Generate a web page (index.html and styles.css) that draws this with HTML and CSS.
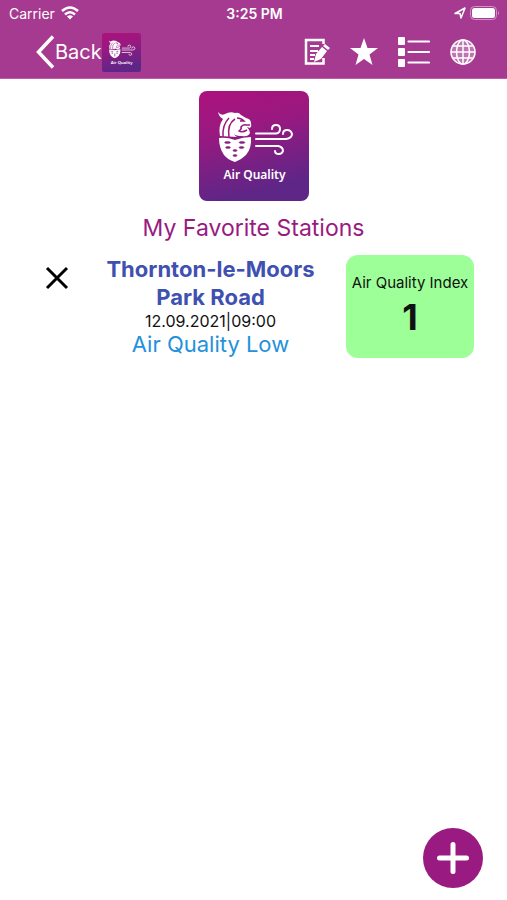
FILE: index.html
```html
<!DOCTYPE html>
<html lang="en">
<head>
<meta charset="utf-8">
<meta name="viewport" content="width=device-width, initial-scale=1">
<title>My Favorite Stations</title>
<link rel="stylesheet" href="styles.css">
</head>
<body>
<svg class="defs" width="0" height="0" aria-hidden="true">
  <defs>
    <linearGradient id="logo-bg" x1="0" y1="0" x2="0.25" y2="1">
      <stop offset="0" stop-color="#ac117c"/>
      <stop offset="0.4" stop-color="#991980"/>
      <stop offset="1" stop-color="#5d2687"/>
    </linearGradient>
    <symbol id="logo" viewBox="0 0 110 110">
      <rect width="110" height="110" rx="8" fill="url(#logo-bg)"/>
      <path fill="#fff" d="M19 21Q22 25 26 23Q31 20 36 22Q40 21 42 24L47 27Q52 28 52 32Q53 35 51 37L48 36Q51 39 51 42Q49 46 43 45Q37 45 35 43Q36 45 38 46L21 45Q19 35 24 28Q20 26 19 21Z"/>
      <path class="logo-cut" d="M30 27Q23 34 24 46M36 28Q28 33 30 46M38 27Q42 27 45 30L41 30M51 34L47 34Q44 33 42 36Q43 38 40 40Q43 42 48 39"/>
      <path fill="#fff" d="M20 47Q28 46 36 49Q44 46 52 46Q53 57 47 64Q42 69 36 71Q29 69 25 64Q20 57 20 47Z"/>
      <g class="logo-mark"><ellipse cx="28.500" cy="51.500" rx="3" ry="1"/><ellipse cx="43" cy="51.500" rx="3" ry="1"/><ellipse cx="29" cy="56.500" rx="2.500" ry="1"/><ellipse cx="42.500" cy="56.500" rx="2.500" ry="1"/><ellipse cx="36" cy="59.500" rx="2" ry="1"/><ellipse cx="36" cy="64.500" rx="2" ry="1"/></g>
      <path class="logo-wind" d="M57 42.500H77Q81 42 81 38Q81 34 77 34Q73 34 73 38M57 48H87Q93 47 93 43Q92 39 88 39Q84 39 84 43M57 55H79Q84 56 84 60Q83 63 80 63Q76 63 76 60"/>
      <text x="55.500" y="88" text-anchor="middle" class="logo-text">Air Quality</text>
    </symbol>
  </defs>
</svg>

<header class="header">
  <div class="status">
    <span class="carrier">Carrier
      <svg width="18" height="14" viewBox="0 0 18 14" aria-hidden="true"><g fill="none" stroke="#fff" stroke-width="2.600"><path d="M1 5Q9-2 17 5"/><path d="M4 8.500Q9 4 14 8.500"/></g><path d="M6 10.500Q9 8 12 10.500L9 13.500Z" fill="#fff"/></svg>
    </span>
    <span class="time">3:25 PM</span>
    <span class="power">
      <svg width="12" height="12" viewBox="0 0 12 12" aria-hidden="true"><path d="M1 6.500L11 1L7 11L6 6.500Z" fill="none" stroke="#fff" stroke-width="1.500" stroke-linejoin="round"/></svg>
      <svg width="30" height="14" viewBox="0 0 30 14" aria-hidden="true"><rect x=".5" y=".5" width="26" height="13" rx="4" fill="none" stroke="#d194c8"/><rect x="2" y="2" width="23" height="10" rx="2.500" fill="#fff"/><path d="M28 5Q30 7 28 9Z" fill="#d194c8"/></svg>
    </span>
  </div>
  <nav class="nav">
    <a class="back" href="#">
      <svg width="19" height="34" viewBox="0 0 19 34" aria-hidden="true"><path d="M17 1.500L2.500 17L17 32.500" fill="none" stroke="#fff" stroke-width="3.500"/></svg>
      <span>Back</span>
      <svg class="mini-logo" aria-hidden="true"><use href="#logo"/></svg>
    </a>
    <div class="actions">
      <button class="icon-button" aria-label="Report">
        <svg width="26" height="28" viewBox="0 0 26 28" aria-hidden="true"><path d="M19.500 6V2H2V25.500H19.500V20" fill="none" stroke="#fff" stroke-width="2.500"/><path d="M6 8H15M6 13H14M6 17H11M6 21H10" stroke="#fff" stroke-width="2"/><path d="M10 24L12 16L18 9L23 13L17 21Z" fill="#fff"/><path d="M19 8L21 6L26 10L24 12Z" fill="#fff"/></svg>
      </button>
      <button class="icon-button" aria-label="Favorites">
        <svg width="28" height="28" viewBox="0 0 28 28" aria-hidden="true"><path d="M14 0L17.500 10H28L19.500 16.500L22.500 27L14 21L5.500 27L8.500 16.500L0 10H10.500Z" fill="#fff"/></svg>
      </button>
      <button class="icon-button" aria-label="Station list">
        <svg width="32" height="32" viewBox="0 0 32 32" aria-hidden="true"><g fill="#fff"><rect y="1" width="7" height="8" rx="1"/><rect y="12" width="7" height="8" rx="1"/><rect y="23" width="7" height="8" rx="1"/></g><path d="M10.500 5.500H31M10.500 16H31M10.500 26.500H31" stroke="#fff" stroke-width="2.200" stroke-linecap="round"/></svg>
      </button>
      <button class="icon-button" aria-label="Language">
        <svg width="26" height="26" viewBox="0 0 26 26" aria-hidden="true"><circle cx="13" cy="13" r="12.500" fill="#fff" fill-opacity=".3"/><g fill="none" stroke="#fff" stroke-width="1.500"><circle cx="13" cy="13" r="12"/><ellipse cx="13" cy="13" rx="6.500" ry="12"/><path d="M13 1V25M1 13H25M3 7H23M3 19H23"/></g></svg>
      </button>
    </div>
  </nav>
</header>

<main class="main">
  <svg class="logo" role="img" aria-label="Air Quality"><use href="#logo"/></svg>
  <h1 class="title">My Favorite Stations</h1>
  <article class="station">
    <button class="remove" aria-label="Remove station">
      <svg width="24" height="24" viewBox="0 0 24 24" aria-hidden="true"><path d="M2 2L22 22M22 2L2 22" stroke="#000" stroke-width="3"/></svg>
    </button>
    <div class="details">
      <h2 class="name">Thornton-le-Moors Park Road</h2>
      <p class="date">12.09.2021|09:00</p>
      <p class="quality">Air Quality Low</p>
    </div>
    <div class="index">
      <span class="index-label">Air Quality Index</span>
      <strong class="index-value">1</strong>
    </div>
  </article>
</main>

<button class="add" aria-label="Add station">
  <svg width="32" height="32" viewBox="0 0 32 32" aria-hidden="true"><path d="M16 2.500V29.500M2.500 16H29.500" stroke="#fff" stroke-width="5" stroke-linecap="round"/></svg>
</button>
</body>
</html>
```
FILE: styles.css
```css
* {
  box-sizing: border-box;
}

body {
  margin: 0;
  min-height: 100vh;
  background: #fff;
  color: #111;
  font-family: Inter, "Liberation Sans", sans-serif;
}

h1, h2, p {
  margin: 0;
}

button {
  padding: 0;
  border: 0;
  background: none;
  cursor: pointer;
}

svg {
  display: block;
  flex: none;
}

.defs {
  position: absolute;
}

.header {
  background: #a53a90;
  border-bottom: 1px solid #b85fa7;
  color: #fff;
}

.status {
  display: grid;
  grid-template-columns: 1fr auto 1fr;
  align-items: center;
  height: 26px;
  padding: 0 7px 0 9px;
  font-size: 14px;
}

.carrier, .power {
  display: flex;
  align-items: center;
  gap: 6px;
}

.power {
  justify-content: flex-end;
  gap: 4px;
}

.time {
  font-weight: 600;
}

.nav {
  display: flex;
  align-items: center;
  justify-content: space-between;
  height: 52px;
  padding: 0 31px 0 36px;
}

.back {
  display: flex;
  align-items: center;
  color: #fff;
  font-size: 20px;
  text-decoration: none;
}

.mini-logo {
  width: 39px;
  height: 39px;
}

.actions {
  display: flex;
  align-items: center;
  gap: 20px;
}

.icon-button {
  display: grid;
  place-items: center;
}

.main {
  padding: 12px 33px;
}

.logo {
  width: 110px;
  height: 110px;
  margin: 0 auto;
}

.logo-cut {
  fill: none;
  stroke: #99197f;
  stroke-width: 1.5px;
}

.logo-mark {
  fill: #891d82;
  stroke: #891d82;
  stroke-width: 0.5px;
}

.logo-wind {
  fill: none;
  stroke: #fff;
  stroke-width: 2px;
  stroke-linecap: round;
}

.logo-text {
  fill: #fff;
  font-family: "Noto Sans", sans-serif;
  font-size: 12px;
  font-weight: 600;
}

.title {
  margin-top: 12px;
  color: #991b82;
  font-size: 23px;
  font-weight: 400;
  line-height: 30px;
  text-align: center;
}

.station {
  display: grid;
  grid-template-columns: 48px 1fr 128px;
  align-items: start;
  margin-top: 12px;
}

.remove {
  display: grid;
  place-items: center;
  height: 46px;
}

.details {
  padding: 0 18px 0 12px;
  text-align: center;
}

.name {
  color: #3f51b0;
  font-size: 22px;
  font-weight: 700;
  line-height: 28px;
}

.date {
  font-size: 16px;
  line-height: 20px;
}

.quality {
  color: #2491dc;
  font-size: 22px;
  line-height: 26px;
}

.index {
  display: flex;
  flex-direction: column;
  align-items: center;
  padding: 18px 0 17px;
  border-radius: 12px;
  background: #9cff98;
}

.index-label {
  font-size: 15px;
  line-height: 20px;
  white-space: nowrap;
}

.index-value {
  font-size: 36px;
  line-height: 48px;
}

.add {
  position: fixed;
  right: 24px;
  bottom: 12px;
  display: grid;
  place-items: center;
  width: 60px;
  height: 60px;
  border-radius: 50%;
  background: #991b82;
}
```
